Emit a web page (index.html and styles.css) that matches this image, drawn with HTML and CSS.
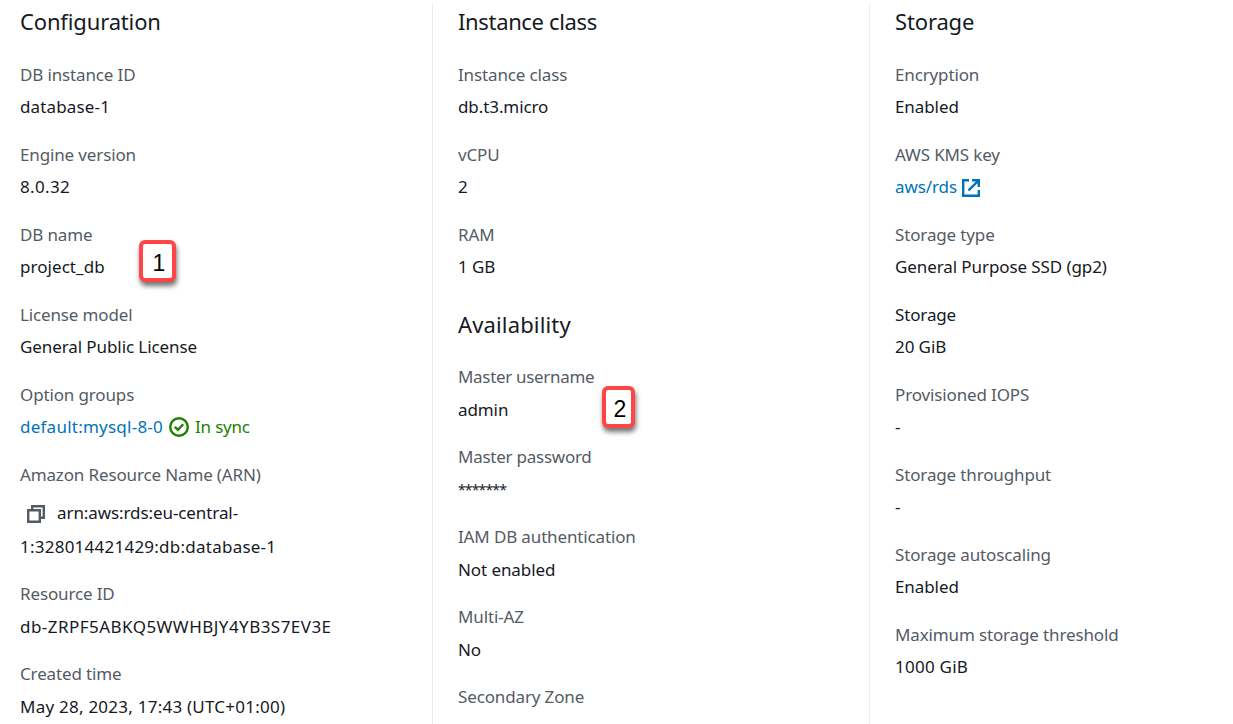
FILE: index.html
```html
<!DOCTYPE html>
<html lang="en">
<head>
<meta charset="utf-8">
<title>Database configuration</title>
<link rel="stylesheet" href="styles.css">
</head>
<body>
<main class="details">
  <section class="column">
    <h2>Configuration</h2>
    <dl>
      <div class="item"><dt>DB instance ID</dt><dd class="identifier">database-1</dd></div>
      <div class="item"><dt>Engine version</dt><dd class="version">8.0.32</dd></div>
      <div class="item"><dt>DB name</dt><dd class="db-name">project_db</dd><span class="callout callout-one">1</span></div>
      <div class="item"><dt>License model</dt><dd>General Public License</dd></div>
      <div class="item"><dt>Option groups</dt><dd class="inline"><a class="option">default:mysql-8-0</a><svg class="check" viewBox="0 0 20 20"><circle cx="10" cy="10" r="8.8"/><path d="M5.8 9.8 9 12.8 14.2 7.3"/></svg><span class="sync">In sync</span></dd></div>
      <div class="item arn"><dt>Amazon Resource Name (ARN)</dt><dd><svg class="copy" viewBox="0 0 18 18"><path d="M1.2 5.2h11.6v11.6H1.2zM5.2 5V1.2h11.6v11.6H13"/></svg>arn:aws:rds:eu-central-<br><span class="number">1:328014421429:db:database-1</span></dd></div>
      <div class="item tall"><dt>Resource ID</dt><dd class="resource">db-ZRPF5ABKQ5WWHBJY4YB3S7EV3E</dd></div>
      <div class="item tall"><dt>Created time</dt><dd class="number">May 28, 2023, 17:43 (UTC+01:00)</dd></div>
    </dl>
  </section>
  <section class="column">
    <h2 class="compact">Instance class</h2>
    <dl>
      <div class="item"><dt>Instance class</dt><dd>db.t3.micro</dd></div>
      <div class="item"><dt>vCPU</dt><dd>2</dd></div>
      <div class="item"><dt>RAM</dt><dd>1 GB</dd></div>
    </dl>
    <h2 class="second">Availability</h2>
    <dl>
      <div class="item tall"><dt class="username">Master username</dt><dd>admin</dd><span class="callout callout-two">2</span></div>
      <div class="item tall"><dt class="password">Master password</dt><dd class="stars">*******</dd></div>
      <div class="item tall"><dt>IAM DB authentication</dt><dd>Not enabled</dd></div>
      <div class="item tall"><dt>Multi-AZ</dt><dd>No</dd></div>
      <div class="item tall"><dt>Secondary Zone</dt></div>
    </dl>
  </section>
  <section class="column">
    <h2>Storage</h2>
    <dl>
      <div class="item"><dt>Encryption</dt><dd>Enabled</dd></div>
      <div class="item"><dt>AWS KMS key</dt><dd class="inline"><a>aws/rds</a><svg class="external" viewBox="0 0 18 18"><path d="M7 1.2H1.2v15.6h15.6V11M10 1.2h6.8V8M16.4 1.6 6.5 11.5"/></svg></dd></div>
      <div class="item"><dt>Storage type</dt><dd>General Purpose SSD (gp2)</dd></div>
      <div class="item"><dt class="dark">Storage</dt><dd>20 GiB</dd></div>
      <div class="item"><dt>Provisioned IOPS</dt><dd>-</dd></div>
      <div class="item"><dt>Storage throughput</dt><dd>-</dd></div>
      <div class="item"><dt>Storage autoscaling</dt><dd>Enabled</dd></div>
      <div class="item"><dt>Maximum storage threshold</dt><dd class="number">1000 GiB</dd></div>
    </dl>
  </section>
</main>
</body>
</html>
```

FILE: styles.css
```css
* { box-sizing: border-box; }
body {
  margin: 0;
  height: 724px;
  overflow: hidden;
  background: #fff;
  color: #16191f;
  font: 17px/32px "Noto Sans", sans-serif;
  letter-spacing: -0.09px;
}
.details {
  display: grid;
  grid-template-columns: 432px 437px 1fr;
  height: 724px;
  padding-top: 4px;
  overflow: hidden;
}
.column { padding: 1px 0 0 20px; height: 720px; white-space: nowrap; }
.column + .column { border-left: 1px solid #eaeded; padding-left: 25px; }
h2 { margin: 0 0 22px; font-size: 22px; line-height: 32px; font-weight: 400; letter-spacing: -0.15px; }
h2.compact { letter-spacing: -0.35px; }
h2.second { margin: 25px 0 21px; letter-spacing: 0.15px; }
dl, dd { margin: 0; }
dl { display: flex; flex-direction: column; gap: 16px; }
.item { position: relative; height: 64px; }
dt { color: #545b64; letter-spacing: -0.14px; }
dt.dark { color: #16191f; }
dt.username { letter-spacing: -0.32px; }
dt.password { letter-spacing: -0.25px; }
.tall dd { line-height: 33px; }
a { color: #0073bb; }
.inline { display: flex; align-items: center; }
.identifier { letter-spacing: 0.15px; }
.version { letter-spacing: 0.35px; }
.db-name { letter-spacing: 0.05px; }
.option, .number { letter-spacing: 0.24px; }
.resource { letter-spacing: 0.46px; }
.item .stars { font-size: 14px; letter-spacing: -0.85px; }
svg { fill: none; stroke: currentColor; stroke-width: 2.4; }
.check { width: 20px; height: 20px; margin: 0 6px; color: #1d8102; }
.sync { color: #1d8102; letter-spacing: -0.2px; }
.external { width: 18px; height: 18px; margin: 2px 0 0 5px; color: #0073bb; }
.arn { height: 103px; }
.arn dd { padding-top: 5px; line-height: 34px; }
.copy { width: 18px; height: 18px; margin: 0 12px 0 7px; color: #545b64; vertical-align: -4px; }
.callout {
  position: absolute;
  width: 37px;
  height: 42px;
  padding-left: 3px;
  border: 4px solid #ff4545;
  border-radius: 6px;
  background: #fff;
  color: #000;
  box-shadow: 1px 4px 5px rgba(0, 0, 0, 0.55);
  font: 23px/38px "Liberation Sans", sans-serif;
  text-align: center;
  letter-spacing: 0;
}
.callout-one { left: 119px; top: 21px; }
.callout-two { left: 144px; top: 25px; width: 33px; }
```
